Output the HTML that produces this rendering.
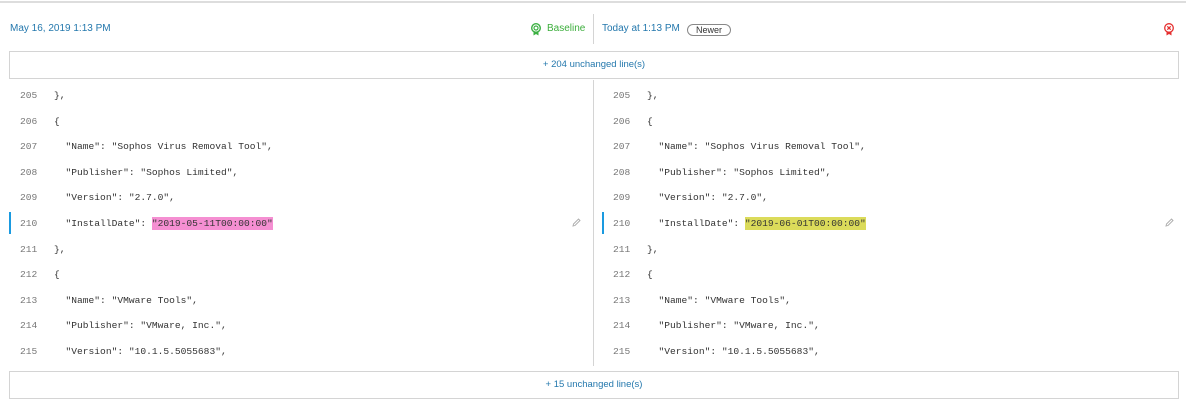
<!DOCTYPE html>
<html><head><meta charset="utf-8"><style>
*{margin:0;padding:0;box-sizing:border-box}
body{width:1186px;height:406px;background:#fff;position:relative;overflow:hidden;font-family:"Liberation Sans",sans-serif}
.abs{position:absolute}
.top{left:0;top:1px;width:1186px;height:2px;background:#ddd}
.hdr{font-size:10px;color:#2478ad;top:23px;white-space:nowrap}
.box{left:9px;width:1170px;height:28px;border:1px solid #d4d4d4;text-align:center;font-size:9.5px;color:#2478ad;line-height:26px}
.code{font-family:"Liberation Mono",monospace;font-size:9.6px;color:#333;white-space:pre;line-height:12px}
.ln{color:#777}
.pink{background:#f58fd2;padding:1px 0}
.yel{background:#dbdb5a;padding:1px 0}
.bar{width:2px;height:22px;background:#1a9ae0}
</style></head><body>
<div class="abs top"></div>
<div class="abs hdr" style="left:10px">May 16, 2019 1:13 PM</div>
<svg class="abs" style="left:530px;top:23px" width="12" height="13" viewBox="0 0 12 13"><circle cx="6" cy="5" r="4.3" fill="none" stroke="#3cb043" stroke-width="1.4"/><circle cx="6" cy="5" r="2" fill="none" stroke="#3cb043" stroke-width="1.2"/><path d="M3.5 8.5 L3.5 12.5 L6 11 L8.5 12.5 L8.5 8.5" fill="#3cb043"/></svg>
<div class="abs hdr" style="left:547px;color:#3cae3c">Baseline</div>
<div class="abs" style="left:593px;top:14px;width:1px;height:30px;background:#d4d4d4"></div>
<div class="abs hdr" style="left:602px">Today at 1:13 PM</div>
<div class="abs" style="left:687px;top:24px;width:44px;height:12px;border:1px solid #888;border-radius:6px;font-size:9px;line-height:10px;text-align:center;color:#333">Newer</div>
<svg class="abs" style="left:1163px;top:23px" width="12" height="13" viewBox="0 0 12 13"><circle cx="6" cy="5" r="4.3" fill="none" stroke="#e53030" stroke-width="1.3"/><path d="M4.3 3.3 L7.7 6.7 M7.7 3.3 L4.3 6.7" stroke="#e53030" stroke-width="1.3"/><path d="M3.5 8.5 L3.5 12.5 L6 11 L8.5 12.5 L8.5 8.5" fill="#e53030"/></svg>
<div class="abs box" style="top:51px">+ 204 unchanged line(s)</div>
<div class="abs" style="left:593px;top:80px;width:1px;height:286px;background:#d4d4d4"></div>
<div class="abs bar" style="left:9px;top:212px"></div>
<div class="abs bar" style="left:602px;top:212px"></div>
<svg class="abs" style="left:572px;top:218px" width="9" height="9" viewBox="0 0 9 9"><path d="M1 8 L1.5 6 L6.5 1 L8 2.5 L3 7.5 Z" fill="none" stroke="#aaa" stroke-width="0.9"/></svg>
<svg class="abs" style="left:1165px;top:218px" width="9" height="9" viewBox="0 0 9 9"><path d="M1 8 L1.5 6 L6.5 1 L8 2.5 L3 7.5 Z" fill="none" stroke="#aaa" stroke-width="0.9"/></svg>
<div id="L"></div>
<div class="abs box" style="top:371px">+ 15 unchanged line(s)</div>
<script>
var lines=[["205","},"],["206","{"],["207","  \"Name\": \"Sophos Virus Removal Tool\","],["208","  \"Publisher\": \"Sophos Limited\","],["209","  \"Version\": \"2.7.0\","],["210",null],["211","},"],["212","{"],["213","  \"Name\": \"VMware Tools\","],["214","  \"Publisher\": \"VMware, Inc.\","],["215","  \"Version\": \"10.1.5.5055683\","]];
var h="";
[[20,54,'pink','"2019-05-11T00:00:00"'],[613,647,'yel','"2019-06-01T00:00:00"']].forEach(function(s){
lines.forEach(function(l,i){var y=90+i*25.6;
h+='<div class="abs code ln" style="left:'+s[0]+'px;top:'+y+'px">'+l[0]+'</div>';
var t=l[1]===null?'  "InstallDate": <span class="'+s[2]+'">'+s[3]+'</span>':l[1].replace(/&/g,'&amp;');
h+='<div class="abs code" style="left:'+s[1]+'px;top:'+y+'px">'+t+'</div>';});});
document.getElementById('L').innerHTML=h;
</script>
</body></html>
